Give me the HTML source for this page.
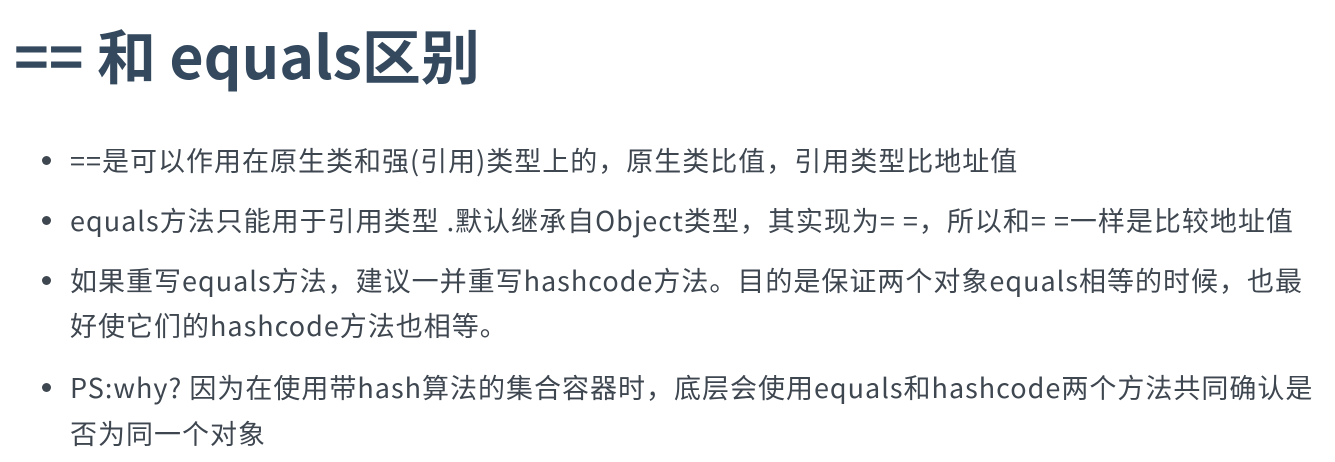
<!DOCTYPE html>
<html><head><meta charset="utf-8"><style>
body{margin:0;width:1335px;height:462px;background:#fff;overflow:hidden;font-family:"Noto Sans CJK SC","Liberation Sans",sans-serif;}
h1{position:absolute;left:14px;top:14px;margin:0;font-size:59px;font-weight:700;color:#34495e;line-height:80px;white-space:nowrap;}
.l{position:absolute;left:70px;font-size:27px;letter-spacing:1px;color:#3e4650;white-space:nowrap;line-height:40px;}
.b{position:absolute;left:42px;width:9px;height:9px;border-radius:50%;background:#3e4650;}
</style></head><body>
<h1>== 和 equals区别</h1>
<div class="b" style="top:156px"></div><div class="l" style="top:140px">==是可以作用在原生类和强(引用)类型上的，原生类比值，引用类型比地址值</div>
<div class="b" style="top:216px"></div><div class="l" style="top:200px">equals方法只能用于引用类型 .默认继承自Object类型，其实现为= =，所以和= =一样是比较地址值</div>
<div class="b" style="top:276px"></div><div class="l" style="top:260px">如果重写equals方法，建议一并重写hashcode方法。目的是保证两个对象equals相等的时候，也最</div>
<div class="l" style="top:305px">好使它们的hashcode方法也相等。</div>
<div class="b" style="top:383px"></div><div class="l" style="top:367px">PS:why? 因为在使用带hash算法的集合容器时，底层会使用equals和hashcode两个方法共同确认是</div>
<div class="l" style="top:413px">否为同一个对象</div>
</body></html>
